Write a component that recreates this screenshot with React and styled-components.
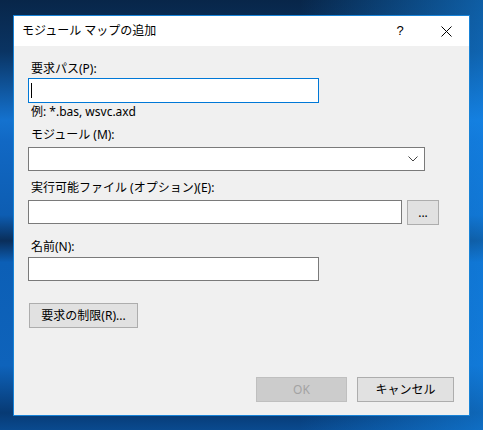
import React from "react";
import styled, { createGlobalStyle } from "styled-components";

const GlobalStyle = createGlobalStyle`
  html, body {
    margin: 0;
    padding: 0;
  }
  body {
    font-family: "Noto Sans", "Noto Sans CJK JP", sans-serif;
    font-size: 12px;
    color: #000;
  }
`;

function App() {
  return (
    <Desktop>
      <GlobalStyle />
      <Window>
        <TitleBar>
          <Title>モジュール マップの追加</Title>
          <CaptionButton>
            <span className="help">?</span>
          </CaptionButton>
          <CaptionButton>
            <svg width="11" height="11" viewBox="0 0 11 11">
              <path d="M0.5 0.5 L10.5 10.5 M10.5 0.5 L0.5 10.5" stroke="#000" strokeWidth="1" />
            </svg>
          </CaptionButton>
        </TitleBar>
        <Body>
          <Label>要求パス(P):</Label>
          <TextBox width={291} height={25} focused>
            <Caret />
          </TextBox>
          <Hint>例: *.bas, wsvc.axd</Hint>

          <Label top={7}>モジュール (M):</Label>
          <ComboBox>
            <svg width="10" height="6" viewBox="0 0 10 6">
              <path d="M0.5 0.5 L5 5 L9.5 0.5" stroke="#444" strokeWidth="1" fill="none" />
            </svg>
          </ComboBox>

          <Label top={9}>実行可能ファイル (オプション)(E):</Label>
          <Row>
            <TextBox width={374} height={24} />
            <Button width={32}>...</Button>
          </Row>

          <Label top={14} bottom={2}>名前(N):</Label>
          <TextBox width={291} height={24} />

          <Button width={109} className="restrict">要求の制限(R)...</Button>

          <Footer>
            <Button width={91} disabled>OK</Button>
            <Button width={97}>キャンセル</Button>
          </Footer>
        </Body>
      </Window>
    </Desktop>
  );
}

export default App;

const Desktop = styled.div`
  width: 483px;
  height: 430px;
  overflow: hidden;
  padding: 15px 0 0 13px;
  box-sizing: border-box;
  background:
    linear-gradient(90deg, rgba(0, 0, 0, 0) 62%, rgba(20, 140, 240, 0.55) 100%),
    linear-gradient(
      180deg,
      #082649 0%,
      #0a3463 12%,
      #1472cf 28%,
      #1168c4 33%,
      #0d5db2 50%,
      #0a2e5a 56%,
      #0c5fb6 61%,
      #0e63bb 85%,
      #073a74 96%,
      #0a4a8f 100%
    );
`;

const Window = styled.div`
  width: 457px;
  height: 401px;
  box-sizing: border-box;
  border: 1px solid #1883d7;
  background: #f0f0f0;
  display: flex;
  flex-direction: column;
`;

const TitleBar = styled.div`
  height: 30px;
  background: #fff;
  display: flex;
  align-items: center;
  flex-shrink: 0;
`;

const Title = styled.div`
  flex: 1;
  padding-left: 8px;
  font-size: 12px;
  line-height: 16px;
`;

const CaptionButton = styled.div`
  width: 46px;
  height: 30px;
  display: flex;
  align-items: center;
  justify-content: center;

  & .help {
    font-family: "Liberation Sans", sans-serif;
    font-size: 13px;
    line-height: 16px;
  }
`;

const Body = styled.div`
  flex: 1;
  display: flex;
  flex-direction: column;
  align-items: flex-start;
  padding: 15px 15px 13px 14px;
`;

const Label = styled.div`
  margin-top: ${(p) => p.top || 0}px;
  margin-left: 3px;
  height: 16px;
  line-height: 16px;
  margin-bottom: ${(p) => (p.bottom !== undefined ? p.bottom : p.top ? 4 : 1)}px;
`;

const Hint = styled.div`
  margin-left: 3px;
  margin-top: 1px;
  height: 16px;
  line-height: 16px;
`;

const TextBox = styled.div`
  position: relative;
  box-sizing: border-box;
  width: ${(p) => p.width}px;
  height: ${(p) => p.height}px;
  background: #fff;
  border: 1px solid ${(p) => (p.focused ? "#0078d7" : "#7a7a7a")};
`;

const Caret = styled.span`
  position: absolute;
  left: 2px;
  top: 4px;
  width: 1px;
  height: 15px;
  background: #000;
`;

const ComboBox = styled.div`
  box-sizing: border-box;
  width: 397px;
  height: 24px;
  background: #fff;
  border: 1px solid #7a7a7a;
  display: flex;
  align-items: center;
  justify-content: flex-end;
  padding-right: 6px;
`;

const Row = styled.div`
  display: flex;
  align-items: flex-start;
  gap: 5px;
`;

const Button = styled.div`
  box-sizing: border-box;
  width: ${(p) => p.width}px;
  height: 25px;
  display: flex;
  align-items: center;
  justify-content: center;
  line-height: 16px;
  background: ${(p) => (p.disabled ? "#cccccc" : "#e1e1e1")};
  border: 1px solid ${(p) => (p.disabled ? "#bfbfbf" : "#adadad")};
  color: ${(p) => (p.disabled ? "#a3a3a3" : "#000")};

  &.restrict {
    margin-top: 22px;
    margin-left: 1px;
  }
`;

const Footer = styled.div`
  margin-top: auto;
  align-self: flex-end;
  display: flex;
  gap: 10px;
`;
